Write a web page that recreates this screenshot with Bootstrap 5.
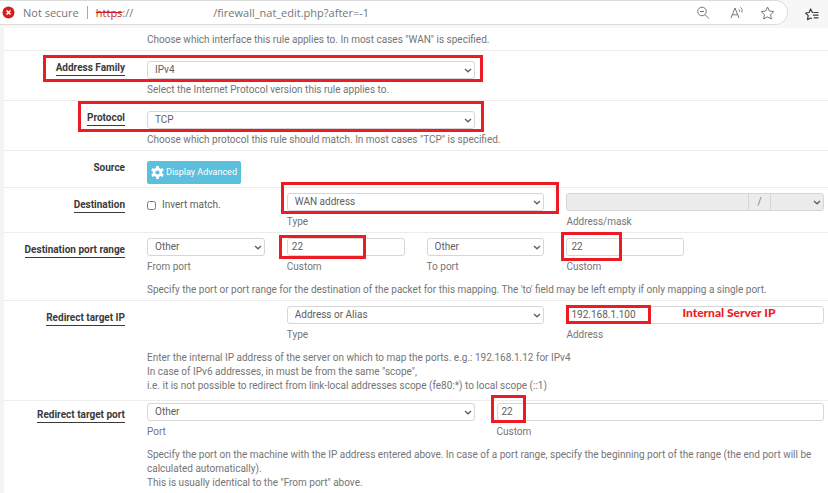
<!DOCTYPE html>
<html lang="en">
<head>
<meta charset="utf-8">
<meta name="viewport" content="width=device-width, initial-scale=1">
<title>Firewall: NAT: Port Forward: Edit</title>
<link href="https://cdn.jsdelivr.net/npm/bootstrap@5.3.0/dist/css/bootstrap.min.css" rel="stylesheet">
<style>
  body { font-family: Roboto, "Liberation Sans", sans-serif; font-size: 10px; line-height: 14px; color: #757575; background: #f3f3f3; }
  .browser-bar { height: 28px; background: #f7f7f7; font: 11px/24px "Open Sans", "Noto Sans", sans-serif; color: #767676; }
  .address { height: 25px; border: 1px solid #dcdcdc; border-width: 1px 1px 1px 0; border-radius: 0 13px 13px 0; padding: 0 12px 0 2px; }
  .address-sep { width: 1px; height: 13px; background: #a8a8a8; }
  .bad-scheme { color: #d01f1f; }
  .hidden-host { width: 80px; }
  .icon-btn { line-height: 0; color: #767676; }
  .favs { width: 40px; color: #3c3c3c; }
  .panel-body { margin-left: 4px; }
  .form-line { border-bottom: 1px solid #ececec; padding-right: 4px; padding-bottom: 3px; }
  .form-line:last-child { border-bottom: 0; }
  .line-label { flex: 0 0 121px; margin-right: 22px; padding-top: 10px; text-align: right; font-weight: 700; color: #3a3a3a; }
  .line-label.snug { padding-top: 7px; }
  .line-label .hint { display: inline-block; border-bottom: 1px solid #3a3a3a; line-height: 14px; }
  .line-content { min-width: 0; padding-top: 5px; }
  .line-content.loose { padding-top: 10px; }
  .line-content.snug { padding-top: 2px; }
  .fields { --bs-gutter-x: 22px; }
  .fields > .wide { width: 40%; }
  .fields .form-select, .fields .form-control { height: 18px; min-height: 0; font-size: 10px; line-height: 14px; padding: 0 4px 2px; border: 1px solid #d6d6d6; border-radius: 3px; color: #606060; }
  .fields .form-select { padding: 1px 18px 1px 7px; background-image: url("data:image/svg+xml,%3Csvg xmlns='http://www.w3.org/2000/svg' viewBox='0 0 8 5'%3E%3Cpath d='M1 1l3 2.7L7 1' fill='none' stroke='%23606060' stroke-width='1.4'/%3E%3C/svg%3E"); background-size: 8px 5px; background-position: right 2px center; }
  .fields :disabled, .fields .slash { background-color: #ececec; }
  .slash { font-size: 10px; line-height: 14px; padding: 0; width: 23px; justify-content: center; border-color: #d6d6d6; color: #757575; }
  .fields .mask { flex: 0 0 54px; }
  .caption { display: block; margin-top: 4px; }
  .help { margin: 9px 0 0; }
  .btn-adv { font-size: 9px; font-weight: 400; line-height: 13px; padding: 4px 3px; gap: 2px; color: #fff; background: #5bc0de; border: 1px solid #5bc0de; border-radius: 2px; }
  .tick { appearance: auto; width: 9px; height: 9px; margin: 0; }
  .invert { color: #606060; padding-top: 5px; gap: 6px; }
  .ring { position: absolute; border: 3px solid #ed1c24; pointer-events: none; z-index: 6; }
  .ring-family { inset: -6px -8px -3px -104px; }
  .ring-protocol { inset: -10px -9px -3px -69px; }
  .ring-type { inset: -11px -15px -3px -6px; }
  .ring-from { inset: -3px 39px -3px -8px; }
  .ring-to { inset: -6px 62px -5px -5px; }
  .ring-ip { top: -1px; bottom: 0; left: 0; width: 85px; }
  .ring-port { top: -8px; bottom: -2px; left: -6px; width: 35px; }
  .callout { position: absolute; left: 116px; top: 0; color: #ed1c24; font: 900 12px/14px Lato, sans-serif; z-index: 6; }
</style>
</head>
<body>
<div class="min-vh-100 d-flex flex-column">
  <header class="browser-bar d-flex">
    <div class="address bg-white flex-grow-1 d-flex align-items-center">
      <svg width="13" height="13" viewBox="0 0 13 13" aria-hidden="true"><circle cx="6.500" cy="6.500" r="6" fill="#d01f1f"/><path d="M4.500 4.500l4 4m0-4l-4 4" stroke="#fff" stroke-width="1.600"/></svg>
      <span class="ms-1 ps-1">Not secure</span>
      <span class="address-sep ms-2 me-2"></span>
      <span><s class="bad-scheme">https</s>://</span>
      <span class="hidden-host"></span>
      <span>/firewall_nat_edit.php?after=-1</span>
      <div class="ms-auto d-flex align-items-center gap-3">
        <button class="btn p-0 border-0 icon-btn" aria-label="Zoom out"><svg width="14" height="14" viewBox="0 0 14 14" fill="none" stroke="currentColor"><circle cx="6" cy="5.500" r="4.300"/><path d="M9.200 8.700l3.600 3.800M4 5.500h4"/></svg></button>
        <button class="btn p-0 border-0 icon-btn ms-1" aria-label="Read aloud"><svg width="14" height="14" viewBox="0 0 14 14" fill="none" stroke="currentColor"><path d="M1 12L5 2l4 10M2.400 8.800h5.200M8.600 3.200c.9.6 1.200 1.500.9 2.600M10.300 1.200c1.700 1.200 2.300 3 1.500 5.200"/></svg></button>
        <button class="btn p-0 border-0 icon-btn" aria-label="Add to favorites"><svg width="15" height="14" viewBox="0 0 15 14" fill="none" stroke="currentColor" stroke-linejoin="round"><path d="M7.500 1l1.900 4 4.300.6-3.100 3.100.8 4.300-3.900-2.100L3.600 13l.8-4.300L1.300 5.600 5.600 5z"/></svg></button>
      </div>
    </div>
    <div class="favs d-flex align-items-start justify-content-center pt-1">
      <button class="btn p-0 pt-1 ps-2 border-0 icon-btn text-reset" aria-label="Favorites"><svg width="14" height="13" viewBox="0 0 14 13" fill="none" stroke="currentColor" stroke-width="1.200" stroke-linejoin="round"><path d="M8.500 4.500L7.300 4.300 5.600 1 4.100 4.500.7 5l2.500 2.700-.7 4L5.600 10l1.200.6M8.800 4.500H13.500M8 7.200h5.500M8.800 9.900h4.700"/></svg></button>
    </div>
  </header>

  <main class="panel-body bg-white flex-grow-1">
    <form>
      <div class="form-line d-flex">
        <div class="line-label"></div>
        <div class="line-content flex-grow-1"><div>Choose which interface this rule applies to. In most cases "WAN" is specified.</div></div>
      </div>

      <div class="form-line d-flex">
        <div class="line-label"><label class="hint" for="family">Address Family</label></div>
        <div class="line-content loose flex-grow-1">
          <div class="row fields"><div class="col-6"><div class="position-relative">
            <select class="form-select" id="family"><option>IPv4</option></select><span class="ring ring-family"></span>
          </div></div></div>
          <span class="caption">Select the Internet Protocol version this rule applies to.</span>
        </div>
      </div>

      <div class="form-line d-flex">
        <div class="line-label"><label class="hint" for="protocol">Protocol</label></div>
        <div class="line-content loose flex-grow-1">
          <div class="row fields"><div class="col-6"><div class="position-relative">
            <select class="form-select" id="protocol"><option>TCP</option></select><span class="ring ring-protocol"></span>
          </div></div></div>
          <span class="caption">Choose which protocol this rule should match. In most cases "TCP" is specified.</span>
        </div>
      </div>

      <div class="form-line d-flex">
        <div class="line-label">Source</div>
        <div class="line-content loose flex-grow-1">
          <button type="button" class="btn btn-adv d-flex align-items-center"><svg width="13" height="13" viewBox="0 0 16 16" aria-hidden="true"><g fill="#fff"><circle cx="8" cy="8" r="5.800"/><path d="M6.400 0h3.200l.5 4H5.900zM6.400 16h3.200l.5-4H5.900zM.3 5.400l1.600-2.800 3.700 1.600-2.100 3.600zM15.700 10.600l-1.600 2.800-3.700-1.600 2.100-3.600zM.3 10.600l1.600 2.800 3.700-1.600-2.100-3.600zM15.700 5.400l-1.600-2.800-3.700 1.600 2.100 3.600z"/></g><circle cx="8" cy="8" r="2.600" fill="#5bc0de"/></svg><span>Display Advanced</span></button>
        </div>
      </div>

      <div class="form-line d-flex">
        <div class="line-label"><span class="hint">Destination</span></div>
        <div class="line-content flex-grow-1">
          <div class="row fields row-cols-5">
            <div class="col"><div class="invert d-flex align-items-center"><input class="tick" type="checkbox" id="invert"><label for="invert">Invert match.</label></div></div>
            <div class="wide"><div class="position-relative"><select class="form-select" id="dtype"><option>WAN address</option></select><span class="ring ring-type"></span></div><label class="caption" for="dtype">Type</label></div>
            <div class="wide"><div class="input-group flex-nowrap"><input class="form-control" id="daddr" type="text" disabled><span class="input-group-text slash">/</span><select class="form-select mask" aria-label="Mask" disabled><option></option></select></div><label class="caption" for="daddr">Address/mask</label></div>
          </div>
        </div>
      </div>

      <div class="form-line d-flex">
        <div class="line-label"><span class="hint">Destination port range</span></div>
        <div class="line-content flex-grow-1">
          <div class="row fields row-cols-5">
            <div class="col"><select class="form-select" id="fport"><option>Other</option></select><label class="caption" for="fport">From port</label></div>
            <div class="col"><div class="position-relative"><input class="form-control" id="fcustom" type="text" value="22"><span class="ring ring-from"></span></div><label class="caption" for="fcustom">Custom</label></div>
            <div class="col"><select class="form-select" id="tport"><option>Other</option></select><label class="caption" for="tport">To port</label></div>
            <div class="col"><div class="position-relative"><input class="form-control" id="tcustom" type="text" value="22"><span class="ring ring-to"></span></div><label class="caption" for="tcustom">Custom</label></div>
          </div>
          <p class="help">Specify the port or port range for the destination of the packet for this mapping. The 'to' field may be left empty if only mapping a single port.</p>
        </div>
      </div>

      <div class="form-line d-flex">
        <div class="line-label"><span class="hint">Redirect target IP</span></div>
        <div class="line-content flex-grow-1">
          <div class="row fields row-cols-5">
            <div class="col"></div>
            <div class="wide"><select class="form-select" id="rtype"><option>Address or Alias</option></select><label class="caption" for="rtype">Type</label></div>
            <div class="wide"><div class="position-relative"><input class="form-control" id="raddr" type="text" value="192.168.1.100"><span class="ring ring-ip"></span><span class="callout">Internal Server IP</span></div><label class="caption" for="raddr">Address</label></div>
          </div>
          <p class="help pb-1">Enter the internal IP address of the server on which to map the ports. e.g.: 192.168.1.12 for IPv4<br>In case of IPv6 addresses, in must be from the same "scope",<br>i.e. it is not possible to redirect from link-local addresses scope (fe80:*) to local scope (::1)</p>
        </div>
      </div>

      <div class="form-line d-flex">
        <div class="line-label snug"><span class="hint">Redirect target port</span></div>
        <div class="line-content snug flex-grow-1">
          <div class="row fields">
            <div class="col-6"><select class="form-select" id="rport"><option>Other</option></select><label class="caption" for="rport">Port</label></div>
            <div class="col-6"><div class="position-relative"><input class="form-control" id="rcustom" type="text" value="22"><span class="ring ring-port"></span></div><label class="caption" for="rcustom">Custom</label></div>
          </div>
          <p class="help">Specify the port on the machine with the IP address entered above. In case of a port range, specify the beginning port of the range (the end port will be calculated automatically).<br>This is usually identical to the "From port" above.</p>
        </div>
      </div>
    </form>
  </main>
</div>
<script src="https://cdn.jsdelivr.net/npm/bootstrap@5.3.0/dist/js/bootstrap.bundle.min.js"></script>
</body>
</html>
